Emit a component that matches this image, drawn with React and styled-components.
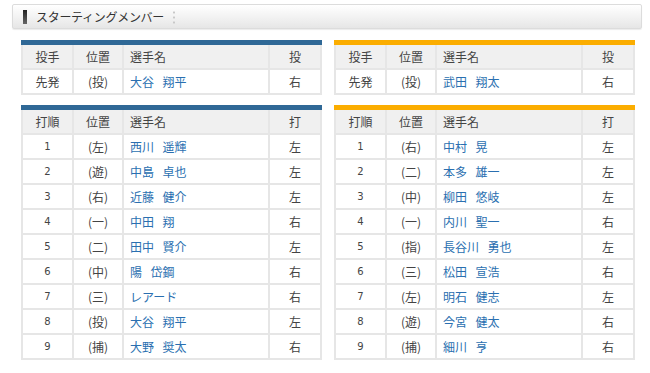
import React from 'react';
import styled, { createGlobalStyle } from 'styled-components';

const GlobalStyle = createGlobalStyle`
  body {
    margin: 0;
    background: #fff;
    font-family: "Noto Sans CJK JP", "Noto Sans", sans-serif;
    color: #333;
  }
`;

const Page = styled.div`
  width: 650px;
  height: 373px;
  overflow: hidden;
  padding-top: 4px;
  box-sizing: border-box;
`;

const TitleBar = styled.div`
  margin-left: 12px;
  width: 630px;
  height: 25px;
  box-sizing: border-box;
  border: 1px solid #dcdcdc;
  border-radius: 2px;
  background: linear-gradient(#ffffff, #f3f3f3 50%, #e6e6e6);
  box-shadow: 0 1px 1px rgba(0, 0, 0, 0.08);
  display: flex;
  align-items: center;
  padding-left: 10px;
`;

const Mark = styled.span`
  width: 4px;
  height: 14px;
  background: linear-gradient(#222, #666);
  margin-right: 9px;
`;

const Title = styled.h2`
  margin: 0;
  font-size: 12px;
  font-weight: normal;
  color: #333;
  letter-spacing: -0.3px;
`;

const Dots = styled.span`
  width: 2px;
  height: 14px;
  margin-left: 9px;
  background: radial-gradient(circle, #c8c8c8 1px, transparent 1.2px) 0 0 / 2px 5px repeat-y;
`;

const Columns = styled.div`
  display: grid;
  grid-template-columns: 299px 299px;
  column-gap: 14px;
  padding-left: 21px;
  margin-top: 11px;
`;

const Side = styled.div`
  display: flex;
  flex-direction: column;
  gap: 10px;
`;

const Table = styled.table`
  width: 299px;
  border-collapse: collapse;
  table-layout: fixed;
  border-top: 5px solid ${(p) => p.$accent};
  font-size: 12px;
`;

const Cell = styled.td`
  height: 23px;
  padding: 0;
  border: 2px solid #e6e6e6;
  background: ${(p) => (p.$head ? '#f0f0f0' : '#fff')};
  text-align: ${(p) => (p.$left ? 'left' : 'center')};
  padding-left: ${(p) => (p.$left ? '6px' : '0')};
  color: ${(p) => (p.$link ? '#2a6fb0' : '#444')};
  font-family: ${(p) =>
    p.$num ? '"DejaVu Sans", sans-serif' : '"Noto Sans CJK JP", sans-serif'};
  font-size: ${(p) => (p.$num ? '10px' : '12px')};
  line-height: 1;
  white-space: nowrap;
`;

const Name = ({ family, given }) => (
  <>
    {family}
    {'\u2002\u2009'}
    {given}
  </>
);

const Cols = () => (
  <colgroup>
    <col style={{ width: 51 }} />
    <col style={{ width: 50 }} />
    <col style={{ width: 146 }} />
    <col style={{ width: 52 }} />
  </colgroup>
);

const PitcherTable = ({ accent, player }) => (
  <Table $accent={accent}>
    <Cols />
    <tbody>
      <tr>
        <Cell $head>投手</Cell>
        <Cell $head>位置</Cell>
        <Cell $head $left>選手名</Cell>
        <Cell $head>投</Cell>
      </tr>
      <tr>
        <Cell>先発</Cell>
        <Cell>(投)</Cell>
        <Cell $left $link>
          <Name family={player[0]} given={player[1]} />
        </Cell>
        <Cell>{player[2]}</Cell>
      </tr>
    </tbody>
  </Table>
);

const OrderTable = ({ accent, rows }) => (
  <Table $accent={accent}>
    <Cols />
    <tbody>
      <tr>
        <Cell $head>打順</Cell>
        <Cell $head>位置</Cell>
        <Cell $head $left>選手名</Cell>
        <Cell $head>打</Cell>
      </tr>
      {rows.map((r, i) => (
        <tr key={i}>
          <Cell $num>{i + 1}</Cell>
          <Cell>({r[0]})</Cell>
          <Cell $left $link>
            {r[2] ? <Name family={r[1]} given={r[2]} /> : r[1]}
          </Cell>
          <Cell>{r[3]}</Cell>
        </tr>
      ))}
    </tbody>
  </Table>
);

const home = [
  ['左', '西川', '遥輝', '左'],
  ['遊', '中島', '卓也', '左'],
  ['右', '近藤', '健介', '左'],
  ['一', '中田', '翔', '右'],
  ['二', '田中', '賢介', '左'],
  ['中', '陽', '岱鋼', '右'],
  ['三', 'レアード', '', '右'],
  ['投', '大谷', '翔平', '左'],
  ['捕', '大野', '奨太', '右'],
];

const away = [
  ['右', '中村', '晃', '左'],
  ['二', '本多', '雄一', '左'],
  ['中', '柳田', '悠岐', '左'],
  ['一', '内川', '聖一', '右'],
  ['指', '長谷川', '勇也', '左'],
  ['三', '松田', '宣浩', '右'],
  ['左', '明石', '健志', '左'],
  ['遊', '今宮', '健太', '右'],
  ['捕', '細川', '亨', '右'],
];

const BLUE = '#2f6896';
const ORANGE = '#fbad00';

export default function App() {
  return (
    <Page>
      <GlobalStyle />
      <TitleBar>
        <Mark />
        <Title>スターティングメンバー</Title>
        <Dots />
      </TitleBar>
      <Columns>
        <Side>
          <PitcherTable accent={BLUE} player={['大谷', '翔平', '右']} />
          <OrderTable accent={BLUE} rows={home} />
        </Side>
        <Side>
          <PitcherTable accent={ORANGE} player={['武田', '翔太', '右']} />
          <OrderTable accent={ORANGE} rows={away} />
        </Side>
      </Columns>
    </Page>
  );
}
